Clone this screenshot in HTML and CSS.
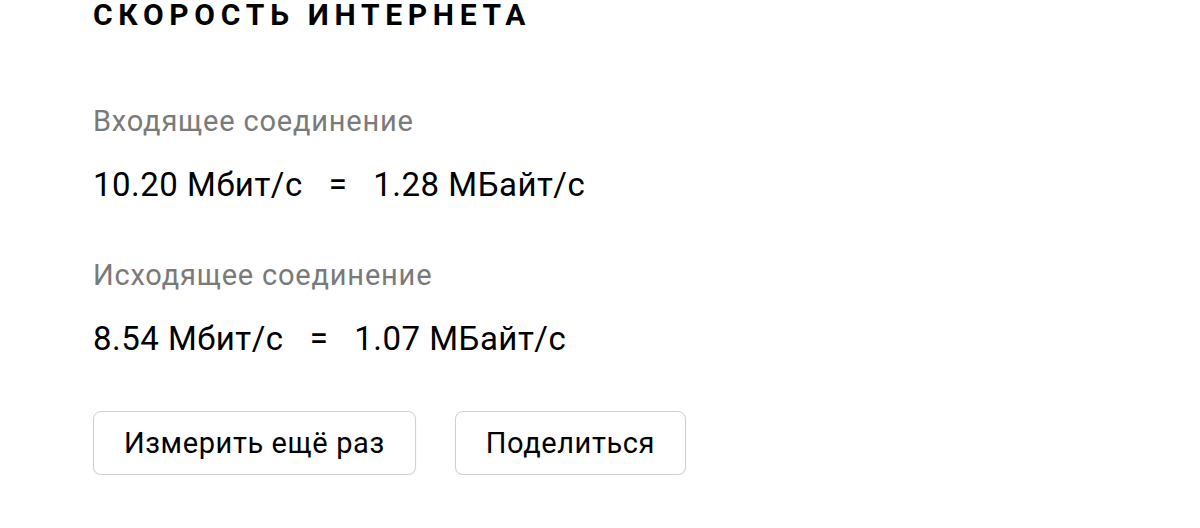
FILE: index.html
```html
<!DOCTYPE html>
<html lang="ru">
<head>
<meta charset="utf-8">
<title>Скорость интернета</title>
<link rel="stylesheet" href="styles.css">
</head>
<body>
<main class="speed">
  <h1 class="speed__title">Скорость интернета</h1>
  <section class="speed__block">
    <div class="speed__label">Входящее соединение</div>
    <div class="speed__value"><span>10.20 Мбит/с</span><span class="speed__eq">=</span><span>1.28 МБайт/с</span></div>
  </section>
  <section class="speed__block speed__block--second">
    <div class="speed__label">Исходящее соединение</div>
    <div class="speed__value"><span>8.54 Мбит/с</span><span class="speed__eq">=</span><span>1.07 МБайт/с</span></div>
  </section>
  <div class="speed__actions">
    <button class="btn">Измерить ещё раз</button>
    <button class="btn">Поделиться</button>
  </div>
</main>
</body>
</html>
```

FILE: styles.css
```css
html, body {
  margin: 0;
  padding: 0;
  background: #fff;
}
body {
  font-family: Roboto, Arial, sans-serif;
  color: #000;
}
.speed {
  padding-left: 93px;
  display: flex;
  flex-direction: column;
  align-items: flex-start;
}
.speed__title {
  margin: 0;
  font-size: 30px;
  line-height: 30px;
  font-weight: 700;
  text-transform: uppercase;
  letter-spacing: 0.19em;
}
.speed__block {
  margin-top: 77px;
}
.speed__block--second {
  margin-top: 60px;
}
.speed__label {
  font-size: 29px;
  line-height: 29px;
  letter-spacing: 0.8px;
  color: #7a7a7a;
}
.speed__value {
  margin-top: 32px;
  font-size: 33px;
  line-height: 33px;
  letter-spacing: 0.5px;
  display: flex;
}
.speed__eq {
  margin: 0 26px;
}
.speed__actions {
  margin-top: 56px;
  display: flex;
  gap: 39px;
}
.btn {
  font-family: inherit;
  font-size: 29px;
  letter-spacing: 0.6px;
  color: #000;
  background: #fff;
  border: 1.5px solid #d0d0d0;
  border-radius: 8px;
  height: 64px;
  padding: 0 30px;
  box-shadow: 0 1px 2px rgba(0,0,0,0.06);
}
```
